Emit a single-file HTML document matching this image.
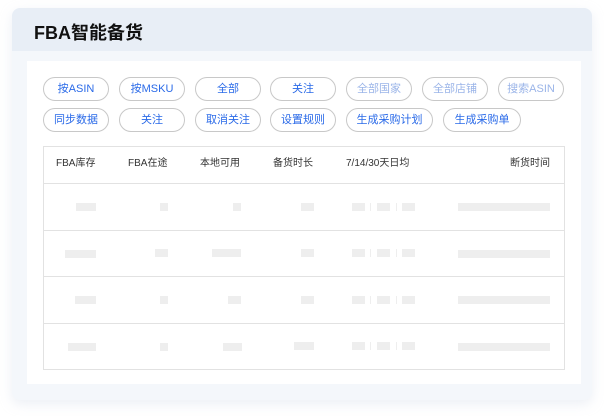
<!DOCTYPE html><html><head><meta charset="utf-8"><style>
*{margin:0;padding:0;box-sizing:border-box}
body{width:604px;height:416px;background:#fff;position:relative;overflow:hidden;font-family:"Liberation Sans","Noto Sans CJK SC",sans-serif}
.card{position:absolute;left:12px;top:8px;width:580px;height:392px;background:#f4f7fb;border-radius:8px;box-shadow:0 4px 12px rgba(200,210,225,.35)}
.hd{position:absolute;left:0;top:0;width:580px;height:43px;background:#e8eef6;border-radius:8px 8px 0 0}
.hd span{position:absolute;left:22px;top:15px;font-size:18px;font-weight:bold;color:#111;line-height:20px}
.panel{position:absolute;left:27px;top:61px;width:554px;height:323px;background:#fff}
.b{position:absolute;height:24px;border:1px solid #c8c8c8;border-radius:12px;font-size:11px;color:#2a6ae8;text-align:center;line-height:22px;background:#fff}
.b.g{color:#9ab4e8}
.tbl{position:absolute;left:43px;top:146px;width:522px;height:224px;border:1px solid #e2e2e2}
.ln{position:absolute;left:43px;width:522px;height:1px;background:#e2e2e2}
.th{position:absolute;top:158px;font-size:10px;color:#333;line-height:12px}
.p{position:absolute;height:8px;background:#eeeeee}
.d{position:absolute;width:1px;height:8px;background:#eee}
</style></head><body>
<div class="card"><div class="hd"><span>FBA智能备货</span></div></div>
<div class="panel"></div>
<div class="b" style="left:43px;top:77px;width:66px">按ASIN</div>
<div class="b" style="left:119px;top:77px;width:66px">按MSKU</div>
<div class="b" style="left:195px;top:77px;width:66px">全部</div>
<div class="b" style="left:270px;top:77px;width:66px">关注</div>
<div class="b g" style="left:346px;top:77px;width:66px">全部国家</div>
<div class="b g" style="left:422px;top:77px;width:66px">全部店铺</div>
<div class="b g" style="left:498px;top:77px;width:66px">搜索ASIN</div>
<div class="b" style="left:43px;top:108px;width:66px">同步数据</div>
<div class="b" style="left:119px;top:108px;width:66px">关注</div>
<div class="b" style="left:195px;top:108px;width:66px">取消关注</div>
<div class="b" style="left:270px;top:108px;width:66px">设置规则</div>
<div class="b" style="left:346px;top:108px;width:87px">生成采购计划</div>
<div class="b" style="left:443px;top:108px;width:78px">生成采购单</div>
<div class="tbl"></div>
<div class="ln" style="top:183px"></div><div class="ln" style="top:230px"></div><div class="ln" style="top:276px"></div><div class="ln" style="top:323px"></div>
<div class="th" style="left:56px">FBA库存</div>
<div class="th" style="left:128px">FBA在途</div>
<div class="th" style="left:200px">本地可用</div>
<div class="th" style="left:273px">备货时长</div>
<div class="th" style="left:346px">7/14/30天日均</div>
<div class="th" style="left:510px">断货时间</div>
<!-- rows -->
<div class="p" style="left:76px;top:203px;width:20px"></div><div class="p" style="left:160px;top:203px;width:8px"></div><div class="p" style="left:233px;top:203px;width:8px"></div><div class="p" style="left:301px;top:203px;width:13px"></div>
<div class="p" style="left:65px;top:250px;width:31px"></div><div class="p" style="left:155px;top:249px;width:13px"></div><div class="p" style="left:212px;top:249px;width:29px"></div><div class="p" style="left:301px;top:249px;width:13px"></div>
<div class="p" style="left:75px;top:296px;width:21px"></div><div class="p" style="left:160px;top:296px;width:8px"></div><div class="p" style="left:228px;top:296px;width:13px"></div><div class="p" style="left:301px;top:296px;width:13px"></div>
<div class="p" style="left:68px;top:343px;width:28px"></div><div class="p" style="left:160px;top:343px;width:8px"></div><div class="p" style="left:223px;top:343px;width:19px"></div><div class="p" style="left:294px;top:342px;width:20px"></div>
<div class="p" style="left:352px;top:203px;width:13px"></div><div class="d" style="left:370px;top:203px"></div><div class="p" style="left:377px;top:203px;width:13px"></div><div class="d" style="left:396px;top:203px"></div><div class="p" style="left:402px;top:203px;width:13px"></div><div class="p" style="left:458px;top:203px;width:92px"></div>
<div class="p" style="left:352px;top:249px;width:13px"></div><div class="d" style="left:370px;top:249px"></div><div class="p" style="left:377px;top:249px;width:13px"></div><div class="d" style="left:396px;top:249px"></div><div class="p" style="left:402px;top:249px;width:13px"></div><div class="p" style="left:458px;top:250px;width:92px"></div>
<div class="p" style="left:352px;top:296px;width:13px"></div><div class="d" style="left:370px;top:296px"></div><div class="p" style="left:377px;top:296px;width:13px"></div><div class="d" style="left:396px;top:296px"></div><div class="p" style="left:402px;top:296px;width:13px"></div><div class="p" style="left:458px;top:296px;width:92px"></div>
<div class="p" style="left:352px;top:342px;width:13px"></div><div class="d" style="left:370px;top:342px"></div><div class="p" style="left:377px;top:342px;width:13px"></div><div class="d" style="left:396px;top:342px"></div><div class="p" style="left:402px;top:342px;width:13px"></div><div class="p" style="left:458px;top:343px;width:92px"></div>
</body></html>
